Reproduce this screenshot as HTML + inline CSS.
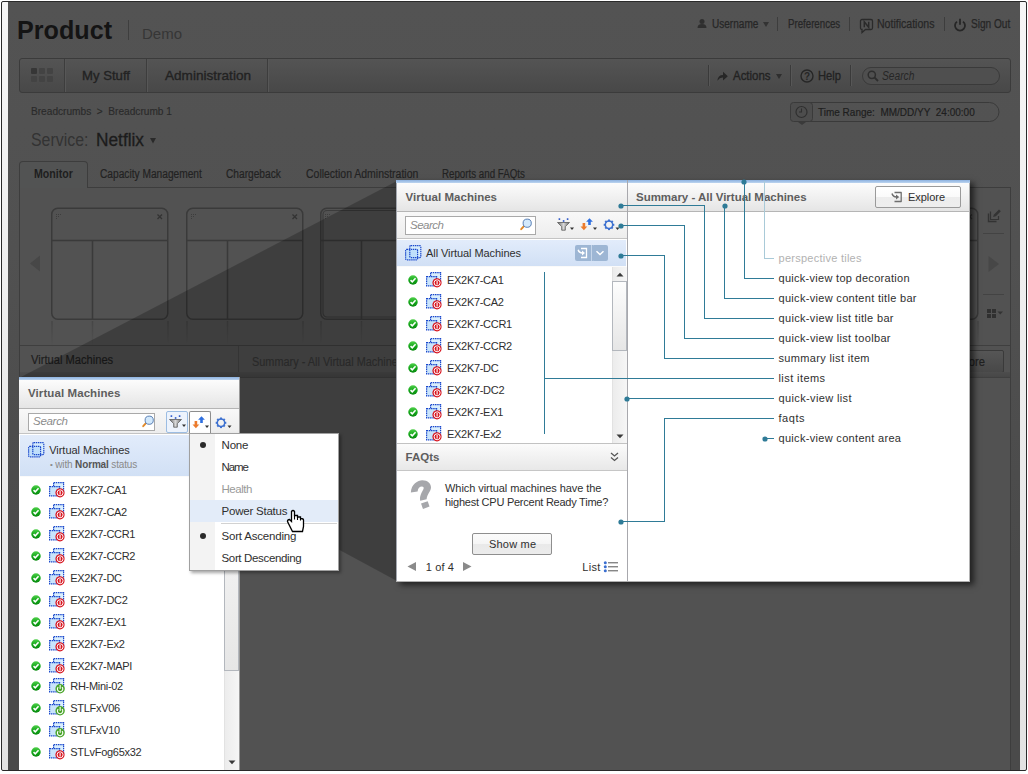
<!DOCTYPE html>
<html><head><meta charset="utf-8"><title>Quick view</title>
<style>
html,body{margin:0;padding:0;width:1028px;height:774px;overflow:hidden;background:#fff;position:relative;font-family:"Liberation Sans",sans-serif}
.t{position:absolute;line-height:1;white-space:pre}
.r{position:absolute;display:block}
</style></head><body>
<svg width="0" height="0" style="position:absolute">
<defs>
<linearGradient id="gchk" x1="0" y1="0" x2="0" y2="1"><stop offset="0" stop-color="#4fd04a"/><stop offset="0.55" stop-color="#13a519"/><stop offset="1" stop-color="#0a8a10"/></linearGradient>
<linearGradient id="gthumb" x1="0" y1="0" x2="1" y2="0"><stop offset="0" stop-color="#fdfdfd"/><stop offset="1" stop-color="#e4e4e4"/></linearGradient>
<linearGradient id="gfun" x1="0" y1="0" x2="1" y2="0"><stop offset="0" stop-color="#6a6a6a"/><stop offset="0.5" stop-color="#d8d8d8"/><stop offset="1" stop-color="#6a6a6a"/></linearGradient>
<symbol id="chk" viewBox="0 0 11 11"><circle cx="5.5" cy="5.5" r="5.2" fill="url(#gchk)"/><path d="M2.8 5.6L4.7 7.5L8.3 3.6" fill="none" stroke="#fff" stroke-width="1.7"/></symbol>
<symbol id="vmr" viewBox="0 0 17 17">
 <rect x="4.6" y="0.6" width="10" height="8.5" fill="#d9eefd" stroke="#1a48cc" stroke-width="1.2" stroke-dasharray="1.5 0.7"/>
 <rect x="0.6" y="4.6" width="10" height="9.2" fill="#c9e4fb" stroke="#1a48cc" stroke-width="1.2" stroke-dasharray="1.5 0.7"/>
 <circle cx="11.0" cy="10.8" r="4.6" fill="#d8141e"/>
 <circle cx="11.1" cy="10.8" r="3.0" fill="none" stroke="#fff" stroke-width="1"/>
 <rect x="10.55" y="9.0" width="1.1" height="3.6" fill="#fff"/>
</symbol>
<symbol id="vmg" viewBox="0 0 17 17">
 <rect x="4.6" y="0.6" width="10" height="8.5" fill="#d9eefd" stroke="#1a48cc" stroke-width="1.2" stroke-dasharray="1.5 0.7"/>
 <rect x="0.6" y="4.6" width="10" height="9.2" fill="#c9e4fb" stroke="#1a48cc" stroke-width="1.2" stroke-dasharray="1.5 0.7"/>
 <circle cx="11.1" cy="10.8" r="4.7" fill="#4aa52a"/>
 <path d="M9.2 9.1A2.7 2.7 0 1 0 13 9.1" fill="none" stroke="#fff" stroke-width="1.1"/>
 <rect x="10.6" y="6.9" width="1.1" height="4" fill="#fff"/>
</symbol>
<symbol id="sumic" viewBox="0 0 17 16">
 <rect x="4.8" y="0.6" width="11" height="12" rx="1" fill="#d6ecfc"/>
 <rect x="0.6" y="4.4" width="12" height="10.4" rx="1" fill="#b9dcfa" fill-opacity="0.8"/>
 <rect x="4.8" y="0.6" width="11" height="12" rx="1" fill="none" stroke="#1a48cc" stroke-width="1.2" stroke-dasharray="1.4 0.7"/>
 <rect x="0.6" y="4.4" width="12" height="10.4" rx="1" fill="none" stroke="#1a48cc" stroke-width="1.2" stroke-dasharray="1.4 0.7"/>
</symbol>
<symbol id="mag" viewBox="0 0 14 14"><path d="M6.2 8.8L3.2 12.2" stroke="#e0892a" stroke-width="1.9" stroke-linecap="round"/><circle cx="9.2" cy="6.2" r="4.1" fill="#d3e9fc" stroke="#5a80b5" stroke-width="1"/></symbol>
<symbol id="filt" viewBox="0 0 17 13"><g fill="#2450c8"><rect x="1.6" y="0.3" width="1.6" height="1.6"/><rect x="5.8" y="2.2" width="1.6" height="1.6"/><rect x="9.8" y="0.3" width="1.6" height="1.6"/></g><path d="M0.5 4.5H12.5L8.3 8.6V12.2H4.7V8.6Z" fill="url(#gfun)" stroke="#5a5a5a" stroke-width="0.8"/><path d="M13 9.6H17L15 12Z" fill="#333"/></symbol>
<symbol id="sort" viewBox="0 0 17 13"><path d="M2.6 5V8.5H0.5L3.9 12.3L7.3 8.5H5.2V5Z" fill="#ec7b2c"/><path d="M8.2 7V3.8H6.1L9.5 0.2L12.9 3.8H10.8V7Z" fill="#2e6fe0"/><path d="M13 9.6H17L15 12Z" fill="#333"/></symbol>
<symbol id="gear" viewBox="0 0 17 13"><g transform="translate(6,6.8)"><circle r="3.7" fill="none" stroke="#3f72d0" stroke-width="1.5"/><g fill="#3f72d0"><rect x="-1" y="-5.3" width="2" height="2"/><rect x="-1" y="3.3" width="2" height="2"/><rect x="-5.3" y="-1" width="2" height="2"/><rect x="3.3" y="-1" width="2" height="2"/><g transform="rotate(45)"><rect x="-1" y="-5.3" width="2" height="2"/><rect x="-1" y="3.3" width="2" height="2"/><rect x="-5.3" y="-1" width="2" height="2"/><rect x="3.3" y="-1" width="2" height="2"/></g></g></g><path d="M12.5 9.6H16.5L14.5 12Z" fill="#333"/></symbol>
<symbol id="dot" viewBox="0 0 6 6"><circle cx="3" cy="3" r="2.6" fill="#2f7b97"/></symbol>
</defs></svg>
<div class="r" style="left:1px;top:1px;width:1026px;height:770px;border:1px solid #2a2a2a;box-sizing:border-box;border-radius:2px;background:linear-gradient(#f6f6f6,#e2e2e2)"></div>
<div class="r" style="left:8px;top:2px;width:1012px;height:768px;background:linear-gradient(#535353 0px,#515151 250px,#4a4a4a 560px,#4a4a4a 768px)"></div>
<div class="t" style="left:17.00px;top:18px;font-size:25px;color:#141414;font-weight:bold;transform:scaleX(1.0059);transform-origin:0 0;">Product</div>
<div class="r" style="left:128px;top:20px;width:1px;height:20px;background:#3e3e3e"></div>
<div class="t" style="left:141.50px;top:26px;font-size:15px;color:#363636;transform:scaleX(0.9997);transform-origin:0 0;">Demo</div>
<svg class="r" style="left:697px;top:19px" width="10" height="9"><circle cx="5" cy="2.6" r="2.5" fill="#2f2f2f"/><path d="M0.5 9 Q0.5 5 5 5 Q9.5 5 9.5 9Z" fill="#2f2f2f"/></svg>
<div class="t" style="left:711.50px;top:18px;font-size:12px;color:#262626;-webkit-text-stroke:0.25px currentColor;transform:scaleX(0.8371);transform-origin:0 0;">Username</div>
<svg class="r" style="left:763px;top:22px" width="6" height="5"><path d="M0 0H6L3 5Z" fill="#333"/></svg>
<div class="r" style="left:777px;top:17px;width:1px;height:14px;background:#3d3d3d"></div>
<div class="t" style="left:787.60px;top:18px;font-size:12px;color:#262626;-webkit-text-stroke:0.25px currentColor;transform:scaleX(0.8069);transform-origin:0 0;">Preferences</div>
<div class="r" style="left:849px;top:17px;width:1px;height:14px;background:#3d3d3d"></div>
<svg class="r" style="left:859px;top:18px" width="15" height="16"><path d="M3 1.5H12A1.5 1.5 0 0 1 13.5 3V10A1.5 1.5 0 0 1 12 11.5H6.5L3 14.5V11.5A1.5 1.5 0 0 1 1.5 10V3A1.5 1.5 0 0 1 3 1.5Z" fill="none" stroke="#2a2a2a" stroke-width="1.3"/><path d="M5.3 9.3V3.8L9.7 9.3V3.8" fill="none" stroke="#2a2a2a" stroke-width="1.5"/></svg>
<div class="t" style="left:877.40px;top:18px;font-size:12px;color:#262626;-webkit-text-stroke:0.25px currentColor;transform:scaleX(0.8794);transform-origin:0 0;">Notifications</div>
<div class="r" style="left:944px;top:17px;width:1px;height:14px;background:#3d3d3d"></div>
<svg class="r" style="left:953px;top:17px" width="14" height="15"><path d="M4 4.6 A5 5 0 1 0 10 4.6" fill="none" stroke="#262626" stroke-width="1.8"/><path d="M7 1.8V7.8" stroke="#262626" stroke-width="1.8"/></svg>
<div class="t" style="left:971.00px;top:18px;font-size:12px;color:#262626;-webkit-text-stroke:0.25px currentColor;transform:scaleX(0.8404);transform-origin:0 0;">Sign Out</div>
<div class="r" style="left:19px;top:58px;width:992px;height:35px;border:1px solid #3b3b3b;box-sizing:border-box;border-radius:3px;background:linear-gradient(#545454,#484848)"></div>
<div class="r" style="left:31px;top:68px;width:6px;height:6px;background:#363636;border-radius:1px"></div>
<div class="r" style="left:31px;top:76px;width:6px;height:6px;background:#434343;border-radius:1px"></div>
<div class="r" style="left:39px;top:68px;width:6px;height:6px;background:#434343;border-radius:1px"></div>
<div class="r" style="left:39px;top:76px;width:6px;height:6px;background:#434343;border-radius:1px"></div>
<div class="r" style="left:47px;top:68px;width:6px;height:6px;background:#434343;border-radius:1px"></div>
<div class="r" style="left:47px;top:76px;width:6px;height:6px;background:#434343;border-radius:1px"></div>
<div class="r" style="left:64px;top:59px;width:1px;height:33px;background:#3d3d3d;box-shadow:1px 0 0 #575757"></div>
<div class="r" style="left:146px;top:59px;width:1px;height:33px;background:#3d3d3d;box-shadow:1px 0 0 #575757"></div>
<div class="r" style="left:267px;top:59px;width:1px;height:33px;background:#3d3d3d;box-shadow:1px 0 0 #575757"></div>
<div class="t" style="left:81.50px;top:69px;font-size:13.5px;color:#222;-webkit-text-stroke:0.35px currentColor;transform:scaleX(0.9737);transform-origin:0 0;">My Stuff</div>
<div class="t" style="left:165.00px;top:69px;font-size:13.5px;color:#222;-webkit-text-stroke:0.35px currentColor;transform:scaleX(1.0055);transform-origin:0 0;">Administration</div>
<div class="r" style="left:708px;top:65px;width:1px;height:21px;background:#3a3a3a;box-shadow:1px 0 0 #575757"></div>
<div class="r" style="left:790px;top:65px;width:1px;height:21px;background:#3a3a3a;box-shadow:1px 0 0 #575757"></div>
<div class="r" style="left:850px;top:65px;width:1px;height:21px;background:#3a3a3a;box-shadow:1px 0 0 #575757"></div>
<svg class="r" style="left:717px;top:71px" width="11" height="10"><path d="M0.3 9.8 Q1 4 6 4V0.8L10.8 5.2L6 9.4V6.6 Q2.8 6.4 0.3 9.8Z" fill="#262626"/></svg>
<div class="t" style="left:733.00px;top:69px;font-size:13.5px;color:#222;-webkit-text-stroke:0.35px currentColor;transform:scaleX(0.8482);transform-origin:0 0;">Actions</div>
<svg class="r" style="left:776px;top:74px" width="6" height="5"><path d="M0 0H6L3 5Z" fill="#2e2e2e"/></svg>
<svg class="r" style="left:800px;top:69px" width="14" height="14"><circle cx="7" cy="7" r="6" fill="none" stroke="#262626" stroke-width="1.4"/><text x="7" y="10.6" font-size="10" font-weight="bold" text-anchor="middle" fill="#262626" font-family="Liberation Sans">?</text></svg>
<div class="t" style="left:817.80px;top:69px;font-size:13.5px;color:#222;-webkit-text-stroke:0.35px currentColor;transform:scaleX(0.8295);transform-origin:0 0;">Help</div>
<div class="r" style="left:862px;top:67px;width:138px;height:18px;border:1px solid #3a3a3a;box-sizing:border-box;border-radius:9px;background:#4f4f4f"></div>
<svg class="r" style="left:867px;top:70px" width="12" height="12"><circle cx="4.8" cy="4.8" r="3.6" fill="none" stroke="#2e2e2e" stroke-width="1.5"/><path d="M7.5 7.5L11 11" stroke="#2e2e2e" stroke-width="1.8"/></svg>
<div class="t" style="left:882.00px;top:70px;font-size:12.5px;color:#262626;font-style:italic;transform:scaleX(0.8185);transform-origin:0 0;">Search</div>
<div class="t" style="left:31.00px;top:106px;font-size:11px;color:#2a2a2a;-webkit-text-stroke:0.15px currentColor;transform:scaleX(0.9201);transform-origin:0 0;">Breadcrumbs  &gt;  Breadcrumb 1</div>
<svg class="r" style="left:790px;top:102px" width="210" height="24"><path d="M10.5 0.5H199.5A9.5 9.5 0 0 1 199.5 19.5H10.5" fill="none" stroke="#3a3a3a"/><rect x="0.5" y="0.5" width="22" height="19" rx="3" fill="#4d4d4d" stroke="#3a3a3a"/><path d="M8 20L12 23L16 20Z" fill="#3a3a3a"/><circle cx="11.5" cy="10" r="5.5" fill="none" stroke="#2f2f2f" stroke-width="1.2"/><path d="M11.5 6.5V10H9" fill="none" stroke="#2f2f2f" stroke-width="1.1"/></svg>
<div class="t" style="left:818.30px;top:107px;font-size:11.5px;color:#1e1e1e;-webkit-text-stroke:0.2px currentColor;transform:scaleX(0.8693);transform-origin:0 0;">Time Range:  MM/DD/YY  24:00:00</div>
<div class="t" style="left:31.00px;top:132px;font-size:17.5px;color:#333;transform:scaleX(0.9081);transform-origin:0 0;">Service:</div>
<div class="t" style="left:96.00px;top:132px;font-size:17.5px;color:#1c1c1c;-webkit-text-stroke:0.3px currentColor;transform:scaleX(0.9870);transform-origin:0 0;">Netflix</div>
<svg class="r" style="left:150px;top:138px" width="6" height="6"><path d="M0 0H6L3 5.5Z" fill="#2a2a2a"/></svg>
<div class="r" style="left:19px;top:187px;width:992px;height:583px;border:1px solid #3d3d3d;box-sizing:border-box;border-bottom:none;background:#525252"></div>
<div class="r" style="left:19px;top:161px;width:69px;height:27px;border:1px solid #3d3d3d;border-bottom:none;box-sizing:border-box;border-radius:4px 4px 0 0;background:#525353"></div>
<div class="t" style="left:34.00px;top:168px;font-size:12px;color:#1e1e1e;font-weight:bold;transform:scaleX(0.8840);transform-origin:0 0;">Monitor</div>
<div class="t" style="left:99.50px;top:168px;font-size:12px;color:#222;-webkit-text-stroke:0.2px currentColor;transform:scaleX(0.8483);transform-origin:0 0;">Capacity Management</div>
<div class="t" style="left:226.00px;top:168px;font-size:12px;color:#222;-webkit-text-stroke:0.2px currentColor;transform:scaleX(0.8477);transform-origin:0 0;">Chargeback</div>
<div class="t" style="left:305.50px;top:168px;font-size:12px;color:#222;-webkit-text-stroke:0.2px currentColor;transform:scaleX(0.8723);transform-origin:0 0;">Collection Adminstration</div>
<div class="t" style="left:441.80px;top:168px;font-size:12px;color:#222;-webkit-text-stroke:0.2px currentColor;transform:scaleX(0.8115);transform-origin:0 0;">Reports and FAQts</div>
<svg class="r" style="left:28px;top:254px" width="14" height="20"><path d="M12 1.5V17.5L2 9.5Z" fill="#474747"/></svg>
<svg class="r" style="left:51px;top:207px" width="118" height="140"><defs><linearGradient id="rf0" x1="0" y1="0" x2="0" y2="1"><stop offset="0" stop-color="#3b3b3b" stop-opacity="0.55"/><stop offset="1" stop-color="#3b3b3b" stop-opacity="0"/></linearGradient></defs><rect x="0.75" y="1.25" width="116" height="111" rx="6" fill="#555" fill-opacity="0.25" stroke="#3a3a3a" stroke-width="1.5"/><path d="M1 33.5H117" stroke="#3a3a3a" stroke-width="1.5"/><path d="M41.5 33.5V112" stroke="#3a3a3a" stroke-width="1.5"/><g fill="#3d3d3d"><rect x="5" y="7" width="1" height="1"/><rect x="7" y="7" width="1" height="1"/><rect x="9" y="7" width="1" height="1"/><rect x="5" y="9" width="1" height="1"/><rect x="7" y="9" width="1" height="1"/><rect x="5" y="11" width="1" height="1"/></g><path d="M106.5 7.5L111 12M111 7.5L106.5 12" stroke="#333" stroke-width="1.3"/><path d="M1 114V140M117 114V140M41.5 114V140" stroke="url(#rf0)" stroke-width="1.5"/></svg>
<svg class="r" style="left:186px;top:207px" width="118" height="140"><defs><linearGradient id="rf1" x1="0" y1="0" x2="0" y2="1"><stop offset="0" stop-color="#3b3b3b" stop-opacity="0.55"/><stop offset="1" stop-color="#3b3b3b" stop-opacity="0"/></linearGradient></defs><rect x="0.75" y="1.25" width="116" height="111" rx="6" fill="#555" fill-opacity="0.25" stroke="#3a3a3a" stroke-width="1.5"/><path d="M1 33.5H117" stroke="#3a3a3a" stroke-width="1.5"/><path d="M41.5 33.5V112" stroke="#3a3a3a" stroke-width="1.5"/><g fill="#3d3d3d"><rect x="5" y="7" width="1" height="1"/><rect x="7" y="7" width="1" height="1"/><rect x="9" y="7" width="1" height="1"/><rect x="5" y="9" width="1" height="1"/><rect x="7" y="9" width="1" height="1"/><rect x="5" y="11" width="1" height="1"/></g><path d="M106.5 7.5L111 12M111 7.5L106.5 12" stroke="#333" stroke-width="1.3"/><path d="M1 114V140M117 114V140M41.5 114V140" stroke="url(#rf1)" stroke-width="1.5"/></svg>
<svg class="r" style="left:320px;top:207px" width="118" height="140"><defs><linearGradient id="rf2" x1="0" y1="0" x2="0" y2="1"><stop offset="0" stop-color="#3b3b3b" stop-opacity="0.55"/><stop offset="1" stop-color="#3b3b3b" stop-opacity="0"/></linearGradient></defs><rect x="0.75" y="1.25" width="116" height="111" rx="6" fill="#555" fill-opacity="0.25" stroke="#3a3a3a" stroke-width="1.5"/><rect x="3" y="3.5" width="111.5" height="106.5" rx="4" fill="none" stroke="#3c3c3c" stroke-width="1.2"/><path d="M1 33.5H117" stroke="#3a3a3a" stroke-width="1.5"/><path d="M41.5 33.5V112" stroke="#3a3a3a" stroke-width="1.5"/><g fill="#3d3d3d"><rect x="5" y="7" width="1" height="1"/><rect x="7" y="7" width="1" height="1"/><rect x="9" y="7" width="1" height="1"/><rect x="5" y="9" width="1" height="1"/><rect x="7" y="9" width="1" height="1"/><rect x="5" y="11" width="1" height="1"/></g><path d="M1 114V140M117 114V140M41.5 114V140" stroke="url(#rf2)" stroke-width="1.5"/></svg>
<svg class="r" style="left:456px;top:207px" width="118" height="140"><defs><linearGradient id="rf3" x1="0" y1="0" x2="0" y2="1"><stop offset="0" stop-color="#3b3b3b" stop-opacity="0.55"/><stop offset="1" stop-color="#3b3b3b" stop-opacity="0"/></linearGradient></defs><rect x="0.75" y="1.25" width="116" height="111" rx="6" fill="#555" fill-opacity="0.25" stroke="#3a3a3a" stroke-width="1.5"/><path d="M1 33.5H117" stroke="#3a3a3a" stroke-width="1.5"/><path d="M41.5 33.5V112" stroke="#3a3a3a" stroke-width="1.5"/><g fill="#3d3d3d"><rect x="5" y="7" width="1" height="1"/><rect x="7" y="7" width="1" height="1"/><rect x="9" y="7" width="1" height="1"/><rect x="5" y="9" width="1" height="1"/><rect x="7" y="9" width="1" height="1"/><rect x="5" y="11" width="1" height="1"/></g><path d="M106.5 7.5L111 12M111 7.5L106.5 12" stroke="#333" stroke-width="1.3"/><path d="M1 114V140M117 114V140M41.5 114V140" stroke="url(#rf3)" stroke-width="1.5"/></svg>
<svg class="r" style="left:591px;top:207px" width="118" height="140"><defs><linearGradient id="rf4" x1="0" y1="0" x2="0" y2="1"><stop offset="0" stop-color="#3b3b3b" stop-opacity="0.55"/><stop offset="1" stop-color="#3b3b3b" stop-opacity="0"/></linearGradient></defs><rect x="0.75" y="1.25" width="116" height="111" rx="6" fill="#555" fill-opacity="0.25" stroke="#3a3a3a" stroke-width="1.5"/><path d="M1 33.5H117" stroke="#3a3a3a" stroke-width="1.5"/><path d="M41.5 33.5V112" stroke="#3a3a3a" stroke-width="1.5"/><g fill="#3d3d3d"><rect x="5" y="7" width="1" height="1"/><rect x="7" y="7" width="1" height="1"/><rect x="9" y="7" width="1" height="1"/><rect x="5" y="9" width="1" height="1"/><rect x="7" y="9" width="1" height="1"/><rect x="5" y="11" width="1" height="1"/></g><path d="M106.5 7.5L111 12M111 7.5L106.5 12" stroke="#333" stroke-width="1.3"/><path d="M1 114V140M117 114V140M41.5 114V140" stroke="url(#rf4)" stroke-width="1.5"/></svg>
<svg class="r" style="left:726px;top:207px" width="118" height="140"><defs><linearGradient id="rf5" x1="0" y1="0" x2="0" y2="1"><stop offset="0" stop-color="#3b3b3b" stop-opacity="0.55"/><stop offset="1" stop-color="#3b3b3b" stop-opacity="0"/></linearGradient></defs><rect x="0.75" y="1.25" width="116" height="111" rx="6" fill="#555" fill-opacity="0.25" stroke="#3a3a3a" stroke-width="1.5"/><path d="M1 33.5H117" stroke="#3a3a3a" stroke-width="1.5"/><path d="M41.5 33.5V112" stroke="#3a3a3a" stroke-width="1.5"/><g fill="#3d3d3d"><rect x="5" y="7" width="1" height="1"/><rect x="7" y="7" width="1" height="1"/><rect x="9" y="7" width="1" height="1"/><rect x="5" y="9" width="1" height="1"/><rect x="7" y="9" width="1" height="1"/><rect x="5" y="11" width="1" height="1"/></g><path d="M106.5 7.5L111 12M111 7.5L106.5 12" stroke="#333" stroke-width="1.3"/><path d="M1 114V140M117 114V140M41.5 114V140" stroke="url(#rf5)" stroke-width="1.5"/></svg>
<svg class="r" style="left:861px;top:207px" width="118" height="140"><defs><linearGradient id="rf6" x1="0" y1="0" x2="0" y2="1"><stop offset="0" stop-color="#3b3b3b" stop-opacity="0.55"/><stop offset="1" stop-color="#3b3b3b" stop-opacity="0"/></linearGradient></defs><rect x="0.75" y="1.25" width="116" height="111" rx="6" fill="#555" fill-opacity="0.25" stroke="#3a3a3a" stroke-width="1.5"/><path d="M1 33.5H117" stroke="#3a3a3a" stroke-width="1.5"/><path d="M41.5 33.5V112" stroke="#3a3a3a" stroke-width="1.5"/><g fill="#3d3d3d"><rect x="5" y="7" width="1" height="1"/><rect x="7" y="7" width="1" height="1"/><rect x="9" y="7" width="1" height="1"/><rect x="5" y="9" width="1" height="1"/><rect x="7" y="9" width="1" height="1"/><rect x="5" y="11" width="1" height="1"/></g><path d="M106.5 7.5L111 12M111 7.5L106.5 12" stroke="#333" stroke-width="1.3"/><path d="M1 114V140M117 114V140M41.5 114V140" stroke="url(#rf6)" stroke-width="1.5"/></svg>
<svg class="r" style="left:986px;top:208px" width="16" height="16"><path d="M2.5 5.5V13.5H10.5" fill="none" stroke="#333" stroke-width="1.4"/><path d="M4.5 3.5V11.5H12.5V8" fill="none" stroke="#333" stroke-width="1.2"/><path d="M7 9L8 6.5L13 1.5L14.8 3.3L9.8 8.3Z" fill="#333"/></svg>
<div class="r" style="left:983px;top:233px;width:21px;height:1px;background:#434343"></div>
<svg class="r" style="left:987px;top:255px" width="14" height="18"><path d="M1.5 1V17L12 9Z" fill="#474747"/></svg>
<div class="r" style="left:983px;top:294px;width:21px;height:1px;background:#434343"></div>
<svg class="r" style="left:987px;top:309px" width="17" height="10"><g fill="#303030"><rect x="0" y="0" width="4" height="4"/><rect x="5" y="0" width="4" height="4"/><rect x="0" y="5" width="4" height="4"/><rect x="5" y="5" width="4" height="4"/></g><path d="M10.5 2.5H16L13.25 5.5Z" fill="#333"/></svg>
<div class="r" style="left:20px;top:345px;width:990px;height:1px;background:#3f3f3f"></div>
<div class="r" style="left:238px;top:346px;width:1px;height:30px;background:#444"></div>
<div class="t" style="left:30.70px;top:354px;font-size:12.5px;color:#1e1e1e;-webkit-text-stroke:0.2px currentColor;transform:scaleX(0.8917);transform-origin:0 0;">Virtual Machines</div>
<div class="t" style="left:251.70px;top:356px;font-size:12px;color:#363636;-webkit-text-stroke:0.15px currentColor;transform:scaleX(0.9088);transform-origin:0 0;">Summary - All Virtual Machines</div>
<div class="r" style="left:940px;top:350px;width:64px;height:23px;border:1px solid #3a3a3a;box-sizing:border-box;border-radius:2px;background:linear-gradient(#565656,#484848)"></div>
<div class="t" style="left:947.00px;top:356px;font-size:12.5px;color:#202020;-webkit-text-stroke:0.2px currentColor;transform:scaleX(0.8941);transform-origin:0 0;">Explore</div>
<div class="r" style="left:20px;top:372px;width:990px;height:5px;background:linear-gradient(#4d4d4d,#474747)"></div>
<div class="r" style="left:20px;top:377px;width:990px;height:1px;background:#404040"></div>
<svg class="r" style="left:0;top:0" width="1028" height="774"><path d="M20 377.5L397 181L397 581Z" fill="#000" fill-opacity="0.235"/></svg>
<div class="r" style="left:396px;top:180px;width:574px;height:402px;background:#fff;box-shadow:4px 3px 6px 0 rgba(0,0,0,0.6)"></div>
<div class="r" style="left:396px;top:180px;width:574px;height:3px;background:linear-gradient(#8db2e0,#bcd4ef)"></div>
<div class="r" style="left:396px;top:183px;width:574px;height:28px;background:linear-gradient(#fcfcfc,#e5e5e5)"></div>
<div class="r" style="left:396px;top:211px;width:574px;height:1px;background:#b5b5b5"></div>
<div class="r" style="left:396px;top:212px;width:231px;height:26px;background:linear-gradient(#f8f8f8,#ededed)"></div>
<div class="r" style="left:396px;top:238px;width:231px;height:1px;background:#c4c4c4"></div>
<div class="r" style="left:397px;top:239px;width:229px;height:1px;background:#fff"></div>
<div class="r" style="left:397px;top:240px;width:229px;height:26px;background:linear-gradient(#e2ecfb,#d1e0f5)"></div>
<div class="r" style="left:397px;top:266px;width:229px;height:1px;background:#fafafa"></div>
<div class="r" style="left:612px;top:267px;width:15px;height:176px;background:linear-gradient(90deg,#ececec,#f6f6f6);border-left:1px solid #e2e2e2;box-sizing:border-box"></div>
<svg class="r" style="left:616px;top:272px" width="8" height="5"><path d="M0.5 4.5L4 0.8L7.5 4.5Z" fill="#3a3a3a"/></svg>
<div class="r" style="left:612px;top:281px;width:15px;height:70px;border:1px solid #b3b7bd;box-sizing:border-box;background:linear-gradient(#fdfdfd,#e6e6e6)"></div>
<svg class="r" style="left:616px;top:434px" width="8" height="5"><path d="M0.5 0.5L4 4.2L7.5 0.5Z" fill="#3a3a3a"/></svg>
<div class="r" style="left:396px;top:443px;width:231px;height:1px;background:#c2c2c2"></div>
<div class="r" style="left:396px;top:444px;width:231px;height:26px;background:linear-gradient(#fbfbfb,#e8e8e8)"></div>
<div class="r" style="left:396px;top:470px;width:231px;height:1px;background:#c6c6c6"></div>
<div class="r" style="left:627px;top:180px;width:1px;height:402px;background:#a8a8ad"></div>
<div class="r" style="left:405px;top:216px;width:131px;height:19px;border:1px solid #a9a9a9;box-sizing:border-box;background:#fff"></div>
<div class="t" style="left:410.00px;top:220px;font-size:11.5px;color:#8c8c8c;font-style:italic;letter-spacing:-0.487px;">Search</div>
<svg class="r" style="left:518px;top:217px" width="14" height="14"><use href="#mag" width="14" height="14"/></svg>
<svg class="r" style="left:557px;top:218px" width="17" height="13"><use href="#filt" width="17" height="13"/></svg>
<svg class="r" style="left:580px;top:218px" width="17" height="13"><use href="#sort" width="17" height="13"/></svg>
<svg class="r" style="left:603px;top:218px" width="17" height="13"><use href="#gear" width="17" height="13"/></svg>
<div class="t" style="left:405.50px;top:192px;font-size:11.5px;color:#5e5e5e;font-weight:bold;letter-spacing:0.021px;">Virtual Machines</div>
<div class="t" style="left:636.00px;top:192px;font-size:11.5px;color:#5e5e5e;font-weight:bold;letter-spacing:-0.024px;">Summary - All Virtual Machines</div>
<svg class="r" style="left:405px;top:245px" width="17" height="16"><use href="#sumic" width="17" height="16"/></svg>
<div class="t" style="left:426.00px;top:248px;font-size:11px;color:#2f2f2f;letter-spacing:-0.073px;">All Virtual Machines</div>
<svg class="r" style="left:575px;top:245px" width="34" height="16"><rect x="0" y="0" width="16" height="16" rx="2" fill="#9db6d4"/><rect x="17" y="0" width="16" height="16" rx="2" fill="#9db6d4"/><rect x="14" y="0" width="4" height="16" fill="#9db6d4"/><rect x="16" y="0" width="1" height="16" fill="#c6d6ea"/><path d="M6 3.5H11.5V12.5H6" fill="none" stroke="#fff" stroke-width="1.3"/><path d="M3.2 4.8Q4 8 7.5 8" fill="none" stroke="#fff" stroke-width="1.5"/><path d="M7 5.5L10 8L7 10.5Z" fill="#fff"/><path d="M21.5 6.3L25 9.5L28.5 6.3" fill="none" stroke="#fff" stroke-width="1.5"/></svg>
<svg class="r" style="left:408px;top:274.8px" width="10" height="10"><use href="#chk" width="10" height="10"/></svg>
<svg class="r" style="left:425.5px;top:272px" width="17" height="17"><use href="#vmr" width="17" height="17"/></svg>
<div class="t" style="left:447.00px;top:275px;font-size:11px;color:#2f2f2f;letter-spacing:-0.3px;">EX2K7-CA1</div>
<svg class="r" style="left:408px;top:296.8px" width="10" height="10"><use href="#chk" width="10" height="10"/></svg>
<svg class="r" style="left:425.5px;top:294px" width="17" height="17"><use href="#vmr" width="17" height="17"/></svg>
<div class="t" style="left:447.00px;top:297px;font-size:11px;color:#2f2f2f;letter-spacing:-0.3px;">EX2K7-CA2</div>
<svg class="r" style="left:408px;top:318.8px" width="10" height="10"><use href="#chk" width="10" height="10"/></svg>
<svg class="r" style="left:425.5px;top:316px" width="17" height="17"><use href="#vmr" width="17" height="17"/></svg>
<div class="t" style="left:447.00px;top:319px;font-size:11px;color:#2f2f2f;letter-spacing:-0.3px;">EX2K7-CCR1</div>
<svg class="r" style="left:408px;top:340.8px" width="10" height="10"><use href="#chk" width="10" height="10"/></svg>
<svg class="r" style="left:425.5px;top:338px" width="17" height="17"><use href="#vmr" width="17" height="17"/></svg>
<div class="t" style="left:447.00px;top:341px;font-size:11px;color:#2f2f2f;letter-spacing:-0.3px;">EX2K7-CCR2</div>
<svg class="r" style="left:408px;top:362.8px" width="10" height="10"><use href="#chk" width="10" height="10"/></svg>
<svg class="r" style="left:425.5px;top:360px" width="17" height="17"><use href="#vmr" width="17" height="17"/></svg>
<div class="t" style="left:447.00px;top:363px;font-size:11px;color:#2f2f2f;letter-spacing:-0.3px;">EX2K7-DC</div>
<svg class="r" style="left:408px;top:384.8px" width="10" height="10"><use href="#chk" width="10" height="10"/></svg>
<svg class="r" style="left:425.5px;top:382px" width="17" height="17"><use href="#vmr" width="17" height="17"/></svg>
<div class="t" style="left:447.00px;top:385px;font-size:11px;color:#2f2f2f;letter-spacing:-0.3px;">EX2K7-DC2</div>
<svg class="r" style="left:408px;top:406.8px" width="10" height="10"><use href="#chk" width="10" height="10"/></svg>
<svg class="r" style="left:425.5px;top:404px" width="17" height="17"><use href="#vmr" width="17" height="17"/></svg>
<div class="t" style="left:447.00px;top:407px;font-size:11px;color:#2f2f2f;letter-spacing:-0.3px;">EX2K7-EX1</div>
<svg class="r" style="left:408px;top:428.8px" width="10" height="10"><use href="#chk" width="10" height="10"/></svg>
<svg class="r" style="left:425.5px;top:426px" width="17" height="17"><use href="#vmr" width="17" height="17"/></svg>
<div class="t" style="left:447.00px;top:429px;font-size:11px;color:#2f2f2f;letter-spacing:-0.3px;">EX2K7-Ex2</div>
<div class="t" style="left:405.50px;top:452px;font-size:11.5px;color:#5e5e5e;font-weight:bold;letter-spacing:0.034px;">FAQts</div>
<svg class="r" style="left:610px;top:452px" width="9" height="10"><path d="M1 1L4.5 4L8 1M1 5.5L4.5 8.5L8 5.5" fill="none" stroke="#555" stroke-width="1.3"/></svg>
<svg class="r" style="left:400px;top:475px" width="40" height="40"><path d="M10.85 17.6C11 9 18 5.2 22.2 5.2C28 5.2 31 8.5 31 12.4C31 16 27 19 26.6 24.3L20.2 25.8C19.3 21 22 17 23.5 14C24.2 12.3 23 11.5 22 11.5C19.5 11.5 18 13 17.6 16.5Z" fill="#a6a7ab"/><path d="M21 28.5L27.7 26.3L29.5 31.6L23 33.9Z" fill="#a6a7ab"/></svg>
<div class="t" style="left:445.00px;top:483px;font-size:11px;color:#2f2f2f;letter-spacing:-0.062px;">Which virtual machines have the</div>
<div class="t" style="left:445.00px;top:497px;font-size:11px;color:#2f2f2f;letter-spacing:-0.243px;">highest CPU Percent Ready Time?</div>
<div class="r" style="left:472px;top:533px;width:80px;height:22px;border:1px solid #8e8e8e;box-sizing:border-box;border-radius:2px;background:linear-gradient(#fbfbfb 0,#f5f5f5 50%,#e9e9e9 50%,#ececec)"></div>
<div class="t" style="left:489.00px;top:539px;font-size:11px;color:#2f2f2f;letter-spacing:0.191px;">Show me</div>
<svg class="r" style="left:407px;top:561px" width="10" height="11"><path d="M9 1V10L0.5 5.5Z" fill="#8a8a8a"/></svg>
<div class="t" style="left:425.70px;top:562px;font-size:11px;color:#2f2f2f;letter-spacing:0.136px;">1 of 4</div>
<svg class="r" style="left:461.5px;top:561px" width="10" height="11"><path d="M1 1V10L9.5 5.5Z" fill="#8a8a8a"/></svg>
<div class="t" style="left:582.30px;top:562px;font-size:11px;color:#2f2f2f;letter-spacing:0.294px;">List</div>
<svg class="r" style="left:603px;top:561px" width="16" height="12"><g fill="#3b6fd0"><circle cx="2.3" cy="1.8" r="1.5"/><circle cx="2.3" cy="5.8" r="1.5"/><circle cx="2.3" cy="9.8" r="1.5"/></g><path d="M5 1.8H15M5 5.8H15M5 9.8H15" stroke="#555" stroke-width="1"/></svg>
<div class="r" style="left:875px;top:186px;width:86px;height:22px;border:1px solid #9a9a9a;box-sizing:border-box;border-radius:2px;background:linear-gradient(#ffffff 0,#fafafa 50%,#ededed 50%,#eeeeee)"></div>
<svg class="r" style="left:891px;top:191px" width="12" height="12"><path d="M3.5 1.5H10.2V10.5H3.5" fill="none" stroke="#6e6e6e" stroke-width="1.3" stroke-linejoin="round"/><path d="M1 2.5Q2 6 5.5 6" fill="none" stroke="#6e6e6e" stroke-width="1.5"/><path d="M5 3.6L8.2 6L5 8.4Z" fill="#6e6e6e"/></svg>
<div class="t" style="left:908.00px;top:192px;font-size:11px;color:#2f2f2f;letter-spacing:-0.049px;">Explore</div>
<div class="r" style="left:396px;top:183px;width:1px;height:399px;background:#a4a8b0"></div>
<div class="r" style="left:969px;top:183px;width:1px;height:399px;background:#b4b4b4"></div>
<div class="r" style="left:396px;top:581px;width:574px;height:1px;background:#b0b0b0"></div>
<div class="r" style="left:764px;top:181px;width:1px;height:78px;background:#a9cad8"></div>
<div class="r" style="left:764px;top:258px;width:10px;height:1px;background:#a9cad8"></div>
<div class="r" style="left:744px;top:181px;width:1px;height:98px;background:#2f7b97"></div>
<div class="r" style="left:744px;top:278px;width:30px;height:1px;background:#2f7b97"></div>
<svg class="r" style="left:741px;top:178.5px" width="6" height="6"><use href="#dot" width="6" height="6"/></svg>
<div class="r" style="left:724px;top:205px;width:1px;height:94px;background:#2f7b97"></div>
<div class="r" style="left:724px;top:298px;width:50px;height:1px;background:#2f7b97"></div>
<svg class="r" style="left:721.5px;top:202.5px" width="6" height="6"><use href="#dot" width="6" height="6"/></svg>
<div class="r" style="left:620px;top:205px;width:85px;height:1px;background:#2f7b97"></div>
<div class="r" style="left:704px;top:205px;width:1px;height:114px;background:#2f7b97"></div>
<div class="r" style="left:704px;top:318px;width:70px;height:1px;background:#2f7b97"></div>
<svg class="r" style="left:617.5px;top:202.5px" width="6" height="6"><use href="#dot" width="6" height="6"/></svg>
<div class="r" style="left:620px;top:225px;width:65px;height:1px;background:#2f7b97"></div>
<div class="r" style="left:684px;top:225px;width:1px;height:114px;background:#2f7b97"></div>
<div class="r" style="left:684px;top:338px;width:90px;height:1px;background:#2f7b97"></div>
<svg class="r" style="left:617.5px;top:222.5px" width="6" height="6"><use href="#dot" width="6" height="6"/></svg>
<div class="r" style="left:620px;top:255px;width:45px;height:1px;background:#2f7b97"></div>
<div class="r" style="left:664px;top:255px;width:1px;height:104px;background:#2f7b97"></div>
<div class="r" style="left:664px;top:358px;width:110px;height:1px;background:#2f7b97"></div>
<svg class="r" style="left:617.5px;top:252.5px" width="6" height="6"><use href="#dot" width="6" height="6"/></svg>
<div class="r" style="left:544px;top:272px;width:1px;height:162px;background:#2f7b97"></div>
<div class="r" style="left:544px;top:378px;width:230px;height:1px;background:#2f7b97"></div>
<div class="r" style="left:627px;top:398px;width:147px;height:1px;background:#2f7b97"></div>
<svg class="r" style="left:624px;top:395.5px" width="6" height="6"><use href="#dot" width="6" height="6"/></svg>
<div class="r" style="left:664px;top:418px;width:110px;height:1px;background:#2f7b97"></div>
<div class="r" style="left:664px;top:418px;width:1px;height:104px;background:#2f7b97"></div>
<div class="r" style="left:620px;top:521px;width:45px;height:1px;background:#2f7b97"></div>
<svg class="r" style="left:617.5px;top:518.5px" width="6" height="6"><use href="#dot" width="6" height="6"/></svg>
<div class="r" style="left:764px;top:438px;width:10px;height:1px;background:#2f7b97"></div>
<svg class="r" style="left:761.5px;top:435.5px" width="6" height="6"><use href="#dot" width="6" height="6"/></svg>
<div class="t" style="left:778.50px;top:253px;font-size:11px;color:#b2b2b2;letter-spacing:0.258px;">perspective tiles</div>
<div class="t" style="left:778.50px;top:273px;font-size:11px;color:#2f2f2f;letter-spacing:0.287px;">quick-view top decoration</div>
<div class="t" style="left:778.50px;top:293px;font-size:11px;color:#2f2f2f;letter-spacing:0.311px;">quick-view content title bar</div>
<div class="t" style="left:778.50px;top:313px;font-size:11px;color:#2f2f2f;letter-spacing:0.334px;">quick-view list title bar</div>
<div class="t" style="left:778.50px;top:333px;font-size:11px;color:#2f2f2f;letter-spacing:0.339px;">quick-view list toolbar</div>
<div class="t" style="left:778.50px;top:353px;font-size:11px;color:#2f2f2f;letter-spacing:0.340px;">summary list item</div>
<div class="t" style="left:778.50px;top:373px;font-size:11px;color:#2f2f2f;letter-spacing:0.413px;">list items</div>
<div class="t" style="left:778.50px;top:393px;font-size:11px;color:#2f2f2f;letter-spacing:0.368px;">quick-view list</div>
<div class="t" style="left:778.50px;top:413px;font-size:11px;color:#2f2f2f;letter-spacing:0.538px;">faqts</div>
<div class="t" style="left:778.50px;top:433px;font-size:11px;color:#2f2f2f;letter-spacing:0.315px;">quick-view content area</div>
<div class="r" style="left:19px;top:377px;width:221px;height:393px;background:#fff"></div>
<div class="r" style="left:19px;top:377px;width:221px;height:3px;background:linear-gradient(#8db2e0,#bcd4ef)"></div>
<div class="r" style="left:19px;top:380px;width:221px;height:28px;background:linear-gradient(#fcfcfc,#e5e5e5)"></div>
<div class="r" style="left:19px;top:408px;width:221px;height:1px;background:#b5b5b5"></div>
<div class="r" style="left:19px;top:409px;width:221px;height:24px;background:linear-gradient(#f8f8f8,#ededed)"></div>
<div class="r" style="left:19px;top:433px;width:221px;height:1px;background:#c4c4c4"></div>
<div class="r" style="left:20px;top:434px;width:219px;height:1px;background:#fff"></div>
<div class="r" style="left:20px;top:435px;width:219px;height:41px;background:linear-gradient(#e2ecfb,#d1e0f5)"></div>
<div class="r" style="left:20px;top:476px;width:219px;height:1px;background:#fafafa"></div>
<div class="r" style="left:239px;top:377px;width:1px;height:393px;background:#9a9a9a"></div>
<div class="t" style="left:28.00px;top:388px;font-size:11.5px;color:#5e5e5e;font-weight:bold;letter-spacing:0.088px;">Virtual Machines</div>
<div class="r" style="left:28px;top:413px;width:127px;height:18px;border:1px solid #a9a9a9;box-sizing:border-box;background:#fff"></div>
<div class="t" style="left:33.00px;top:416px;font-size:11.5px;color:#8c8c8c;font-style:italic;letter-spacing:-0.287px;">Search</div>
<svg class="r" style="left:140px;top:414px" width="14" height="14"><use href="#mag" width="14" height="14"/></svg>
<div class="r" style="left:166px;top:411px;width:22px;height:22px;border:1px solid #9cbde3;box-sizing:border-box;border-radius:2px;background:#edf3fc"></div>
<svg class="r" style="left:169px;top:415px" width="17" height="13"><use href="#filt" width="17" height="13"/></svg>
<div class="r" style="left:189px;top:411px;width:22px;height:23px;border:1px solid #8d8d8d;border-bottom:none;box-sizing:border-box;border-radius:2px 2px 0 0;background:#fff"></div>
<svg class="r" style="left:192px;top:416px" width="17" height="13"><use href="#sort" width="17" height="13"/></svg>
<svg class="r" style="left:215px;top:416px" width="17" height="13"><use href="#gear" width="17" height="13"/></svg>
<svg class="r" style="left:28px;top:442px" width="17" height="16"><use href="#sumic" width="17" height="16"/></svg>
<div class="t" style="left:49.25px;top:445px;font-size:11px;color:#2f2f2f;letter-spacing:-0.041px;">Virtual Machines</div>
<div class="t" style="left:50.00px;top:460px;font-size:10px;color:#8a8a8a;letter-spacing:-0.15px;"><span style="font-size:8px;position:relative;top:-1px">&#8226;</span> with <b style="color:#555">Normal</b> status</div>
<div class="r" style="left:224px;top:477px;width:15px;height:293px;background:linear-gradient(90deg,#ececec,#f6f6f6);border-left:1px solid #e2e2e2;box-sizing:border-box"></div>
<div class="r" style="left:224px;top:440px;width:15px;height:231px;border:1px solid #b3b7bd;box-sizing:border-box;background:linear-gradient(#fdfdfd,#e6e6e6)"></div>
<svg class="r" style="left:228px;top:760px" width="8" height="5"><path d="M0.5 0.5L4 4.2L7.5 0.5Z" fill="#3a3a3a"/></svg>
<svg class="r" style="left:31px;top:485px" width="10" height="10"><use href="#chk" width="10" height="10"/></svg>
<svg class="r" style="left:48.5px;top:482px" width="17" height="17"><use href="#vmr" width="17" height="17"/></svg>
<div class="t" style="left:70.30px;top:485px;font-size:11px;color:#2f2f2f;letter-spacing:-0.3px;">EX2K7-CA1</div>
<svg class="r" style="left:31px;top:507px" width="10" height="10"><use href="#chk" width="10" height="10"/></svg>
<svg class="r" style="left:48.5px;top:504px" width="17" height="17"><use href="#vmr" width="17" height="17"/></svg>
<div class="t" style="left:70.30px;top:507px;font-size:11px;color:#2f2f2f;letter-spacing:-0.3px;">EX2K7-CA2</div>
<svg class="r" style="left:31px;top:529px" width="10" height="10"><use href="#chk" width="10" height="10"/></svg>
<svg class="r" style="left:48.5px;top:526px" width="17" height="17"><use href="#vmr" width="17" height="17"/></svg>
<div class="t" style="left:70.30px;top:529px;font-size:11px;color:#2f2f2f;letter-spacing:-0.3px;">EX2K7-CCR1</div>
<svg class="r" style="left:31px;top:551px" width="10" height="10"><use href="#chk" width="10" height="10"/></svg>
<svg class="r" style="left:48.5px;top:548px" width="17" height="17"><use href="#vmr" width="17" height="17"/></svg>
<div class="t" style="left:70.30px;top:551px;font-size:11px;color:#2f2f2f;letter-spacing:-0.3px;">EX2K7-CCR2</div>
<svg class="r" style="left:31px;top:573px" width="10" height="10"><use href="#chk" width="10" height="10"/></svg>
<svg class="r" style="left:48.5px;top:570px" width="17" height="17"><use href="#vmr" width="17" height="17"/></svg>
<div class="t" style="left:70.30px;top:573px;font-size:11px;color:#2f2f2f;letter-spacing:-0.3px;">EX2K7-DC</div>
<svg class="r" style="left:31px;top:595px" width="10" height="10"><use href="#chk" width="10" height="10"/></svg>
<svg class="r" style="left:48.5px;top:592px" width="17" height="17"><use href="#vmr" width="17" height="17"/></svg>
<div class="t" style="left:70.30px;top:595px;font-size:11px;color:#2f2f2f;letter-spacing:-0.3px;">EX2K7-DC2</div>
<svg class="r" style="left:31px;top:617px" width="10" height="10"><use href="#chk" width="10" height="10"/></svg>
<svg class="r" style="left:48.5px;top:614px" width="17" height="17"><use href="#vmr" width="17" height="17"/></svg>
<div class="t" style="left:70.30px;top:617px;font-size:11px;color:#2f2f2f;letter-spacing:-0.3px;">EX2K7-EX1</div>
<svg class="r" style="left:31px;top:639px" width="10" height="10"><use href="#chk" width="10" height="10"/></svg>
<svg class="r" style="left:48.5px;top:636px" width="17" height="17"><use href="#vmr" width="17" height="17"/></svg>
<div class="t" style="left:70.30px;top:639px;font-size:11px;color:#2f2f2f;letter-spacing:-0.3px;">EX2K7-Ex2</div>
<svg class="r" style="left:31px;top:661px" width="10" height="10"><use href="#chk" width="10" height="10"/></svg>
<svg class="r" style="left:48.5px;top:658px" width="17" height="17"><use href="#vmr" width="17" height="17"/></svg>
<div class="t" style="left:70.30px;top:661px;font-size:11px;color:#2f2f2f;letter-spacing:-0.3px;">EX2K7-MAPI</div>
<svg class="r" style="left:31px;top:681px" width="10" height="10"><use href="#chk" width="10" height="10"/></svg>
<svg class="r" style="left:48.5px;top:678px" width="17" height="17"><use href="#vmg" width="17" height="17"/></svg>
<div class="t" style="left:70.30px;top:681px;font-size:11px;color:#2f2f2f;letter-spacing:-0.3px;">RH-Mini-02</div>
<svg class="r" style="left:31px;top:703px" width="10" height="10"><use href="#chk" width="10" height="10"/></svg>
<svg class="r" style="left:48.5px;top:700px" width="17" height="17"><use href="#vmg" width="17" height="17"/></svg>
<div class="t" style="left:70.30px;top:703px;font-size:11px;color:#2f2f2f;letter-spacing:-0.3px;">STLFxV06</div>
<svg class="r" style="left:31px;top:725px" width="10" height="10"><use href="#chk" width="10" height="10"/></svg>
<svg class="r" style="left:48.5px;top:722px" width="17" height="17"><use href="#vmg" width="17" height="17"/></svg>
<div class="t" style="left:70.30px;top:725px;font-size:11px;color:#2f2f2f;letter-spacing:-0.3px;">STLFxV10</div>
<svg class="r" style="left:31px;top:747px" width="10" height="10"><use href="#chk" width="10" height="10"/></svg>
<svg class="r" style="left:48.5px;top:744px" width="17" height="17"><use href="#vmr" width="17" height="17"/></svg>
<div class="t" style="left:70.30px;top:747px;font-size:11px;color:#2f2f2f;letter-spacing:-0.3px;">STLvFog65x32</div>
<div class="r" style="left:189px;top:433px;width:150px;height:138px;background:#fff;border:1px solid #a0a0a0;box-sizing:border-box;box-shadow:2px 2px 3px rgba(0,0,0,0.35)"></div>
<div class="r" style="left:190px;top:434px;width:25px;height:136px;background:#f3f3f3"></div>
<div class="r" style="left:190px;top:500px;width:148px;height:22px;background:#e3ecf9"></div>
<div class="r" style="left:221px;top:523px;width:116px;height:1px;background:#d2d2d2"></div>
<svg class="r" style="left:198px;top:440px" width="10" height="100"><circle cx="5" cy="5" r="3" fill="#2a2a2a"/><circle cx="5" cy="96" r="3" fill="#2a2a2a"/></svg>
<div class="t" style="left:221.50px;top:440px;font-size:11.5px;color:#2f2f2f;letter-spacing:-0.164px;">None</div>
<div class="t" style="left:221.50px;top:462px;font-size:11.5px;color:#2f2f2f;letter-spacing:-1.059px;">Name</div>
<div class="t" style="left:221.50px;top:484px;font-size:11.5px;color:#9a9a9a;letter-spacing:-0.448px;">Health</div>
<div class="t" style="left:221.50px;top:506px;font-size:11.5px;color:#2f2f2f;letter-spacing:-0.218px;">Power Status</div>
<div class="t" style="left:221.50px;top:531px;font-size:11.5px;color:#2f2f2f;letter-spacing:-0.192px;">Sort Ascending</div>
<div class="t" style="left:221.50px;top:553px;font-size:11.5px;color:#2f2f2f;letter-spacing:-0.344px;">Sort Descending</div>
<svg class="r" style="left:283px;top:507px" width="25" height="28"><path d="M8.5 4.5Q10 2.5 11.5 4.5V8.5H14.5V10H17.5V11.5Q20.5 11.5 20.5 13V19.5L19.5 24.5H9.5L4.5 14.5Q4.5 12.5 6.5 12.5L8.5 14.5Z" fill="#fff" stroke="#000" stroke-width="1.3" stroke-linejoin="miter"/><path d="M11.5 8.5V12.5M14.5 10V13M17.5 11.5V13.5" stroke="#000" stroke-width="1.1"/></svg>
</body></html>
